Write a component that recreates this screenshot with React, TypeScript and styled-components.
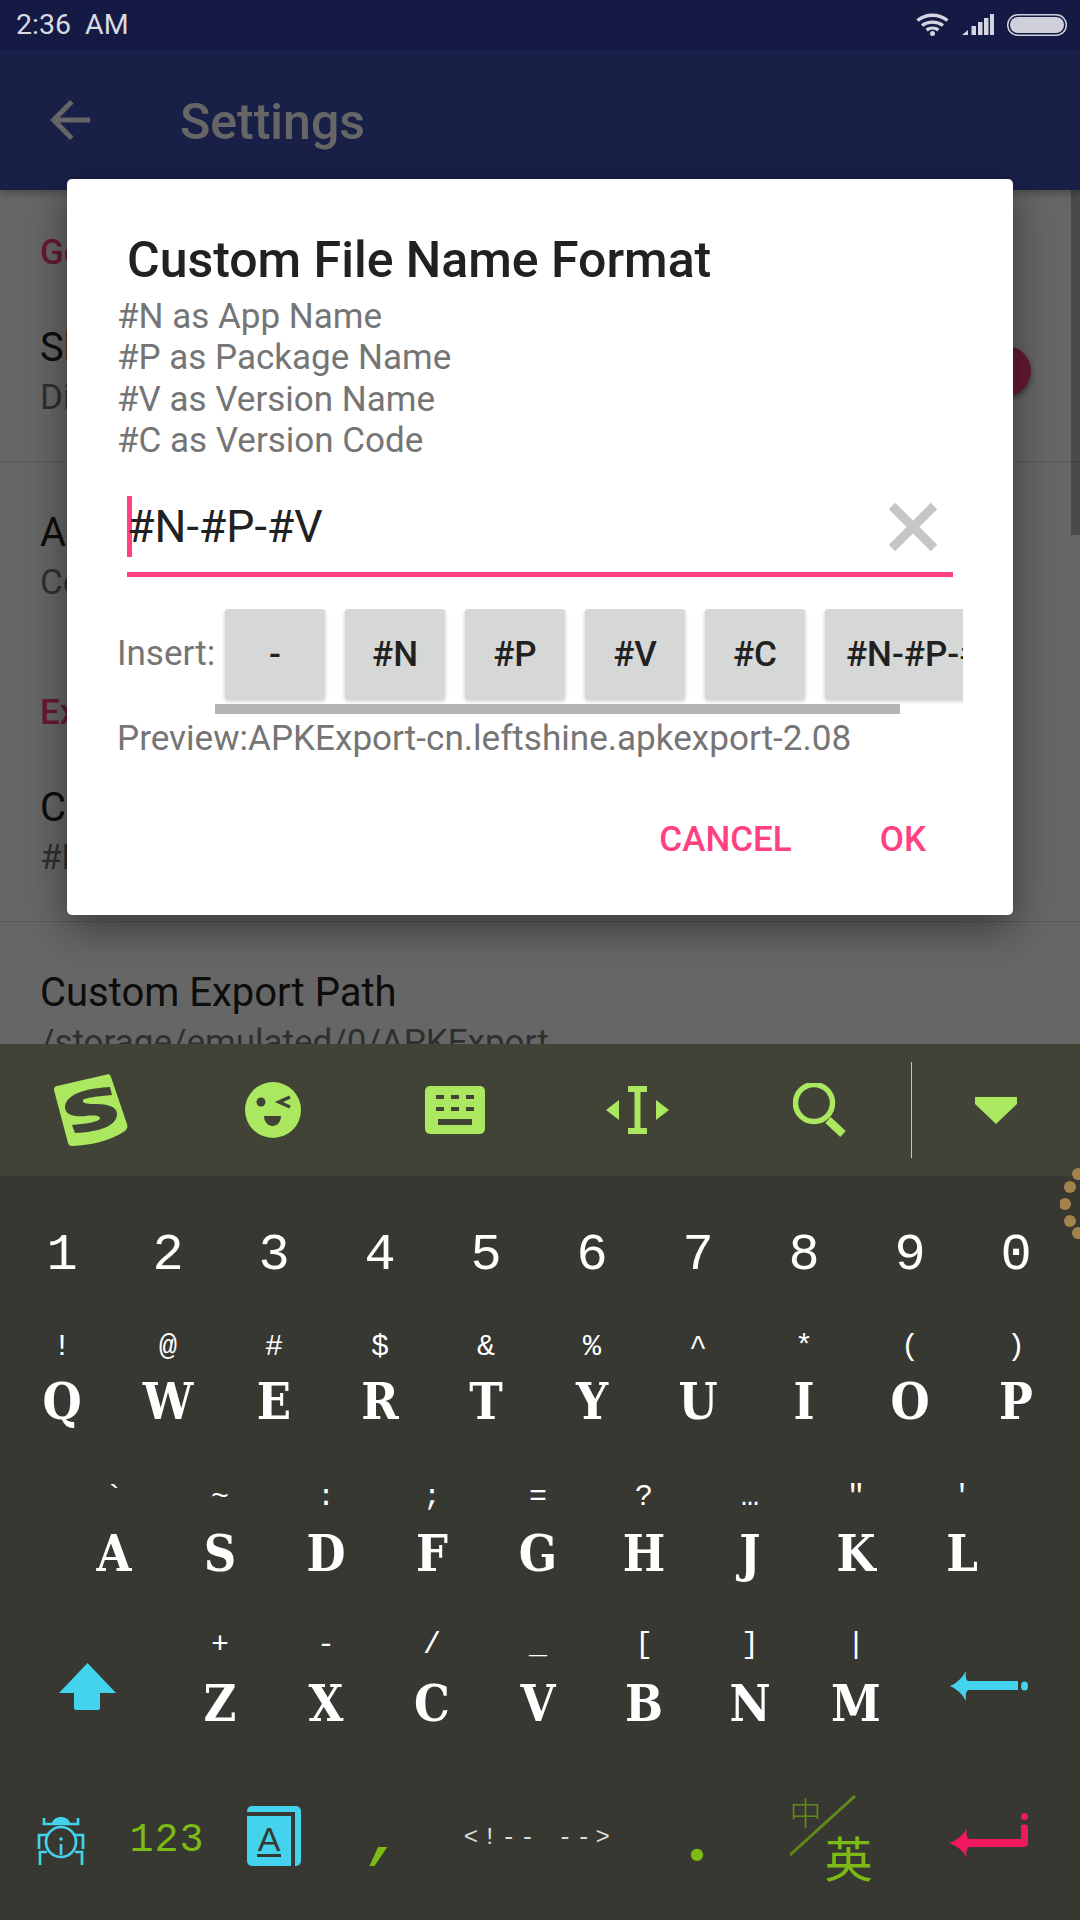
import { FC } from "react";
import styled, { createGlobalStyle } from "styled-components";

const GlobalStyle = createGlobalStyle`
  html, body {
    margin: 0;
    padding: 0;
    background: #373831;
  }
  * {
    box-sizing: border-box;
  }
`;

const ACCENT = "#ff4081";
const LIME = "#abe85f";
const CYAN = "#43d3ec";
const GREEN = "#7dbb14";

const Page = styled.div`
  width: 1080px;
  height: 1920px;
  display: flex;
  flex-direction: column;
  position: relative;
  overflow: hidden;
  font-family: Roboto, "Noto Sans", sans-serif;
`;

const StatusBar = styled.div`
  height: 50px;
  flex-shrink: 0;
  background: #141a44;
  display: flex;
  align-items: center;
  padding: 0 13px 0 16px;
  color: #d8d9e2;
  font-size: 28.5px;
`;

const Time = styled.span`
  flex: 1;
  white-space: pre;
  margin-top: -2px;
`;

const StatusIcons = styled.div`
  display: flex;
  align-items: center;
  gap: 13px;
  margin-top: -1px;
`;

const Main = styled.div`
  flex: 1;
  min-height: 0;
  position: relative;
  overflow: hidden;
  background: #fff;
`;

const AppBar = styled.div`
  height: 140px;
  background: #3f51b5;
  display: flex;
  align-items: center;
  padding-left: 40px;
  color: #fff;
  box-shadow: 0 3px 8px rgba(0, 0, 0, 0.3);
  position: relative;
`;

const AppTitle = styled.div`
  margin-left: 80px;
  margin-top: 3px;
  font-size: 50px;
  font-weight: 500;
`;

const SettingsList = styled.div`
  padding-top: 38px;
`;

const Section = styled.div`
  & + & {
    margin-top: 42px;
  }
`;

const SectionHeader = styled.div`
  height: 49px;
  line-height: 49px;
  padding-left: 40px;
  color: ${ACCENT};
  font-size: 35px;
  font-weight: 500;
`;

const Row = styled.div<{ $divider?: boolean }>`
  display: flex;
  align-items: center;
  justify-content: space-between;
  padding: 46px 49px 38px 40px;
  border-bottom: ${(p) => (p.$divider ? "1px solid #dcdcdc" : "none")};
`;

const RowTitle = styled.div`
  font-size: 40px;
  line-height: 50px;
  color: #212121;
`;

const RowSub = styled.div`
  font-size: 35px;
  line-height: 50px;
  color: #757575;
`;

const SwitchThumb = styled.div`
  width: 50px;
  height: 50px;
  margin-bottom: 5px;
  border-radius: 50%;
  background: ${ACCENT};
  box-shadow: 0 3px 6px rgba(0, 0, 0, 0.45);
`;

const ListScrollbar = styled.div`
  position: absolute;
  right: 0;
  top: 140px;
  width: 9px;
  height: 345px;
  background: rgba(0, 0, 0, 0.28);
`;

const Scrim = styled.div`
  position: absolute;
  inset: 0;
  background: rgba(0, 0, 0, 0.6);
  display: flex;
  justify-content: center;
  padding-top: 129px;
`;

const Dialog = styled.div`
  width: 946px;
  height: 736px;
  background: #fff;
  border-radius: 5px;
  box-shadow: 0 12px 40px rgba(0, 0, 0, 0.45);
  padding: 53px 50px 0 50px;
  display: flex;
  flex-direction: column;
`;

const DialogTitle = styled.div`
  margin-left: 10px;
  font-size: 50px;
  line-height: 56px;
  font-weight: 500;
  color: #212121;
`;

const Hints = styled.div`
  margin-top: 8px;
  font-size: 35px;
  line-height: 41.3px;
  color: #757575;
`;

const InputRow = styled.div`
  margin: 35px 10px 0 10px;
  height: 81px;
  padding-bottom: 15px;
  border-bottom: 5px solid ${ACCENT};
  display: flex;
  align-items: center;
`;

const Caret = styled.div`
  width: 5px;
  height: 61px;
  background: ${ACCENT};
  flex-shrink: 0;
`;

const InputText = styled.div`
  flex: 1;
  margin-left: -5px;
  font-size: 44.7px;
  color: #212121;
`;

const ClearIcon = styled.svg`
  width: 50px;
  height: 50px;
  margin-right: 15px;
  flex-shrink: 0;
`;

const InsertRow = styled.div`
  margin-top: 32px;
  display: flex;
`;

const InsertLabel = styled.div`
  width: 98px;
  height: 90px;
  line-height: 90px;
  font-size: 35px;
  color: #757575;
  flex-shrink: 0;
  white-space: nowrap;
`;

const Scroller = styled.div`
  flex: 1;
  min-width: 0;
  display: flex;
  flex-direction: column;
`;

const ButtonStrip = styled.div`
  display: flex;
  gap: 20px;
  padding: 0 0 5px 10px;
  overflow: hidden;
`;

const InsertButton = styled.div<{ $wide?: boolean }>`
  flex-shrink: 0;
  min-width: 100px;
  height: 90px;
  padding: 0 ${(p) => (p.$wide ? "21px" : "0")};
  display: flex;
  align-items: center;
  justify-content: center;
  background: #d6d7d7;
  border-radius: 3px;
  box-shadow: 0 2px 4px rgba(0, 0, 0, 0.22);
  color: #212121;
  font-size: 35px;
  font-weight: 500;
`;

const ScrollThumb = styled.div`
  width: 685px;
  height: 10px;
  background: #b3b3b3;
`;

const Preview = styled.div`
  margin-top: 4px;
  font-size: 35.1px;
  line-height: 41px;
  color: #757575;
  white-space: nowrap;
`;

const Actions = styled.div`
  margin-top: 61px;
  padding-right: 37px;
  display: flex;
  justify-content: flex-end;
  gap: 88px;
`;

const ActionButton = styled.div`
  color: ${ACCENT};
  font-size: 35px;
  line-height: 40px;
  font-weight: 500;
`;

const Keyboard = styled.div`
  height: 876px;
  flex-shrink: 0;
  position: relative;
  background: #373831;
  display: flex;
  flex-direction: column;
`;

const Toolbar = styled.div`
  height: 132px;
  background: #424337;
  display: flex;
  align-items: center;
`;

const ToolCell = styled.div<{ $wide?: boolean }>`
  width: ${(p) => (p.$wide ? "168px" : "182px")};
  display: flex;
  justify-content: center;
  align-items: center;
`;

const ToolDivider = styled.div`
  width: 1px;
  margin-left: 1px;
  height: 96px;
  background: ${LIME};
`;

const Beads = styled.svg`
  position: absolute;
  right: 0;
  top: 120px;
`;

const DigitRow = styled.div`
  height: 144px;
  padding: 50px 0 0 9px;
  display: flex;
`;

const Digit = styled.div`
  width: 106px;
  height: 60px;
  line-height: 60px;
  text-align: center;
  color: #fff;
  font-family: "Liberation Mono", monospace;
  font-size: 52px;
`;

const KeyRow = styled.div<{ $left: number; $top: number }>`
  height: 150px;
  padding: ${(p) => p.$top}px 0 0 ${(p) => p.$left}px;
  display: flex;
  align-items: flex-start;
`;

const Key = styled.div`
  width: 106px;
  display: flex;
  flex-direction: column;
  align-items: center;
  font-family: "Liberation Mono", monospace;
  color: #fff;
`;

const KeyHint = styled.div`
  height: 40px;
  line-height: 40px;
  font-size: 30px;
`;

const KeyLetter = styled.div<{ $gap: number }>`
  height: 60px;
  line-height: 60px;
  margin-top: ${(p) => p.$gap}px;
  font-family: "DejaVu Serif", serif;
  font-stretch: condensed;
  font-size: 50px;
  font-weight: 700;
`;

const ShiftCell = styled.div`
  width: 167px;
  padding: 38px 0 0 59px;
  display: flex;
`;

const BackspaceCell = styled.div`
  padding: 46px 0 0 41px;
  display: flex;
`;

const BottomRow = styled.div`
  flex: 1;
  display: grid;
  grid-template-columns: 122px 90px 124px 86px 234px 82px 186px 128px;
  align-items: start;
  padding-top: 20px;
`;

const BottomCell = styled.div<{ $top: number }>`
  margin-top: ${(p) => p.$top}px;
  display: flex;
  justify-content: center;
`;

const NumbersKey = styled.div`
  font-family: "Liberation Mono", monospace;
  font-size: 40px;
  line-height: 40px;
  letter-spacing: 1px;
  color: ${GREEN};
`;

const PeriodKey = styled.div`
  font-family: "Liberation Serif", serif;
  font-weight: 700;
  font-size: 76px;
  line-height: 58px;
  color: ${GREEN};
`;

const CommaKey = styled.div`
  margin-left: 12px;
  font-family: "Liberation Mono", monospace;
  font-weight: 700;
  font-style: italic;
  font-size: 60px;
  line-height: 58px;
  color: ${GREEN};
`;

const HtmlKey = styled.div`
  font-family: "Liberation Mono", monospace;
  font-size: 24px;
  line-height: 30px;
  letter-spacing: 4.4px;
  color: #dddddd;
  white-space: pre;
`;

const LangKey = styled.div`
  width: 83px;
  height: 85px;
  display: grid;
  font-family: "Noto Sans CJK SC", sans-serif;
`;

const LangOff = styled.span`
  grid-area: 1 / 1;
  justify-self: start;
  align-self: start;
  font-size: 32px;
  line-height: 32px;
  font-weight: 300;
  color: #5f8a1a;
`;

const LangOn = styled.span`
  grid-area: 1 / 1;
  justify-self: end;
  align-self: end;
  font-size: 48px;
  line-height: 48px;
  color: ${GREEN};
`;

const LangSlash = styled.svg`
  grid-area: 1 / 1;
`;

const rowQ = [
  ["!", "Q"], ["@", "W"], ["#", "E"], ["$", "R"], ["&", "T"],
  ["%", "Y"], ["^", "U"], ["*", "I"], ["(", "O"], [")", "P"],
];
const rowA = [
  ["`", "A"], ["~", "S"], [":", "D"], [";", "F"], ["=", "G"],
  ["?", "H"], ["…", "J"], ['"', "K"], ["'", "L"],
];
const rowZ = [
  ["+", "Z"], ["-", "X"], ["/", "C"], ["_", "V"], ["[", "B"], ["]", "N"], ["|", "M"],
];

const Keys: FC<{ keys: string[][]; gap: number }> = ({ keys, gap }) => (
  <>
    {keys.map(([hint, letter]) => (
      <Key key={letter}>
        <KeyHint>{hint}</KeyHint>
        <KeyLetter $gap={gap}>{letter}</KeyLetter>
      </Key>
    ))}
  </>
);

const WifiIcon = () => (
  <svg width="33" height="23" viewBox="0 0 33 23" fill="none" stroke="#d4d5e0" strokeWidth="3.4">
    <path d="M1.5 7.5C10 .5 23 .5 31.5 7.5" />
    <path d="M6 12.5C12 8 21 8 27 12.5" />
    <path d="M10.5 17C14 14.5 19 14.5 22.5 17" />
    <circle cx="16.5" cy="20.5" r="2.5" fill="#d4d5e0" stroke="none" />
  </svg>
);

const SignalIcon = () => (
  <svg width="32" height="21" viewBox="0 0 32 21" fill="#d4d5e0">
    <path d="M0 21L6 16V21Z" />
    <rect x="9.5" y="12" width="4.5" height="9" />
    <rect x="16" y="8" width="4.5" height="13" />
    <rect x="22" y="4" width="4.5" height="17" />
    <rect x="28" y="0" width="4" height="21" />
  </svg>
);

const BatteryIcon = () => (
  <svg width="60" height="22" viewBox="0 0 60 22">
    <rect x=".75" y=".75" width="58.5" height="20.5" rx="10" fill="none" stroke="#cfd0dc" strokeWidth="1.5" />
    <rect x="3" y="3" width="54" height="16" rx="8" fill="#cfd0dc" />
  </svg>
);

const BackIcon = () => (
  <svg width="60" height="60" viewBox="0 0 24 24" fill="#fff">
    <path d="M20 11H7.83l5.59-5.59L12 4l-8 8 8 8 1.41-1.41L7.83 13H20v-2z" />
  </svg>
);

const LogoIcon = () => (
  <svg width="74" height="73" viewBox="0 0 74 73">
    <path
      d="M3 12L53 .5C55 0 56.5 1 57 3L73 50C74 53 73 55 71 57C55 68 35 71 19 72C16 72.500 14.500 71 14 69L0 16C-.5 14 1 12.500 3 12Z"
      fill={LIME}
    />
    <path
      d="M56 13C38 14 12 18 11 33C11 42 22 43 32 42C40 41 46 42 46 44C46 48 30 50 18 51L21 59C45 58 63 52 63 40C63 31 50 30 40 30C32 30 28 29 29 26C30 24 45 22 58 21Z"
      fill="#424337"
    />
  </svg>
);

const WinkIcon = () => (
  <svg width="56" height="56" viewBox="0 0 56 56">
    <circle cx="28" cy="28" r="28" fill={LIME} />
    <circle cx="16" cy="20" r="4.500" fill="#424337" />
    <path d="M45 15L34 20L45 25" fill="none" stroke="#424337" strokeWidth="3.500" />
    <path d="M19 34H36C36 40 32 44 27.500 44C23 44 19 40 19 34Z" fill="#424337" />
  </svg>
);

const KeyboardIcon = () => (
  <svg width="60" height="48" viewBox="0 0 60 48">
    <rect width="60" height="48" rx="5" fill={LIME} />
    <g fill="#424337">
      <rect x="11" y="9" width="8" height="4" />
      <rect x="26" y="9" width="8" height="4" />
      <rect x="41" y="9" width="8" height="4" />
      <rect x="11" y="21" width="8" height="4" />
      <rect x="26" y="21" width="8" height="4" />
      <rect x="41" y="21" width="8" height="4" />
      <rect x="13" y="33" width="34" height="6" />
    </g>
  </svg>
);

const CursorIcon = () => (
  <svg width="63" height="48" viewBox="0 0 63 48" fill={LIME}>
    <path d="M22 0H41V6H34.500V42H41V48H22V42H28.500V6H22Z" />
    <path d="M0 24L13 14V34Z" />
    <path d="M63 24L50 14V34Z" />
  </svg>
);

const SearchIcon = () => (
  <svg width="53" height="54" viewBox="0 0 53 54" fill="none" stroke={LIME}>
    <circle cx="21" cy="20" r="18.500" strokeWidth="5.500" />
    <path d="M35 37L50 51" strokeWidth="8" />
  </svg>
);

const CollapseIcon = () => (
  <svg width="42" height="27" viewBox="0 0 42 27" fill={LIME}>
    <path d="M0 0H42V7L21 27L0 7Z" />
  </svg>
);

const ShiftIcon = () => (
  <svg width="57" height="47" viewBox="0 0 57 47" fill={CYAN}>
    <path d="M28.500 0L57 30H41V45C41 46 40 47 39 47H17C16 47 15 46 15 45V30H0Z" />
  </svg>
);

const BackspaceIcon = () => (
  <svg width="79" height="30" viewBox="0 0 79 30" fill={CYAN}>
    <path d="M16 0Q10 11 0 15Q10 19 16 30Q15 21 18 19H68V10H18Q15 9 16 0Z" />
    <ellipse cx="74.500" cy="15" rx="3.500" ry="4.500" />
  </svg>
);

const BugIcon = () => (
  <svg width="48" height="48" viewBox="0 0 48 48" fill="none" stroke={CYAN} strokeWidth="2.700">
    <circle cx="24" cy="25" r="15" />
    <path d="M15 6C17 -2 31 -2 33 6Z" fill={CYAN} stroke="none" />
    <path d="M7 1V7H41V1" />
    <path d="M10 18H2V32" />
    <path d="M38 18H46V32" />
    <path d="M10 35H3V48" />
    <path d="M38 35H45V48" />
    <circle cx="24" cy="22" r="1.800" fill={CYAN} stroke="none" />
    <path d="M24 27V38" />
  </svg>
);

const BookIcon = () => (
  <svg width="54" height="60" viewBox="0 0 54 60">
    <rect width="54" height="60" rx="5" fill={CYAN} />
    <rect y="6" width="48" height="4" fill="#373831" />
    <rect x="44" y="10" width="4" height="50" fill="#373831" />
    <text x="22" y="45" textAnchor="middle" fontFamily="Liberation Sans" fontSize="34" fill="#373831">
      A
    </text>
    <rect x="10" y="48" width="24" height="3" fill="#373831" />
  </svg>
);

const EnterIcon = () => (
  <svg width="79" height="45" viewBox="0 0 79 45" fill="#f0185f">
    <circle cx="75.500" cy="3.500" r="3.500" />
    <path d="M18 15Q12 26 0 30Q12 34 18 45Q16 37 20 34H74C77 34 79 33 79 30V13C79 11 72 11 72 13V26H20Q16 23 18 15Z" />
  </svg>
);

const App: FC = () => {
  return (
    <Page>
      <GlobalStyle />
      <StatusBar>
        <Time>2:36  AM</Time>
        <StatusIcons>
          <WifiIcon />
          <SignalIcon />
          <BatteryIcon />
        </StatusIcons>
      </StatusBar>

      <Main>
        <AppBar>
          <BackIcon />
          <AppTitle>Settings</AppTitle>
        </AppBar>
        <SettingsList>
          <Section>
            <SectionHeader>General</SectionHeader>
            <Row $divider>
              <div>
                <RowTitle>Show System Apps</RowTitle>
                <RowSub>Display system apps in list</RowSub>
              </div>
              <SwitchThumb />
            </Row>
            <Row>
              <div>
                <RowTitle>About</RowTitle>
                <RowSub>Contact the developer</RowSub>
              </div>
            </Row>
          </Section>
          <Section>
            <SectionHeader>Export</SectionHeader>
            <Row $divider>
              <div>
                <RowTitle>Custom File Name Format</RowTitle>
                <RowSub>#N-#P-#V</RowSub>
              </div>
            </Row>
            <Row>
              <div>
                <RowTitle>Custom Export Path</RowTitle>
                <RowSub>/storage/emulated/0/APKExport</RowSub>
              </div>
            </Row>
          </Section>
        </SettingsList>
        <ListScrollbar />
        <Scrim>
          <Dialog>
            <DialogTitle>Custom File Name Format</DialogTitle>
            <Hints>
              #N as App Name
              <br />
              #P as Package Name
              <br />
              #V as Version Name
              <br />
              #C as Version Code
            </Hints>
            <InputRow>
              <Caret />
              <InputText>#N-#P-#V</InputText>
              <ClearIcon viewBox="0 0 50 50">
                <path d="M4 4L46 46M46 4L4 46" stroke="#c6c6c6" strokeWidth="9" fill="none" />
              </ClearIcon>
            </InputRow>
            <InsertRow>
              <InsertLabel>Insert:</InsertLabel>
              <Scroller>
                <ButtonStrip>
                  <InsertButton>-</InsertButton>
                  <InsertButton>#N</InsertButton>
                  <InsertButton>#P</InsertButton>
                  <InsertButton>#V</InsertButton>
                  <InsertButton>#C</InsertButton>
                  <InsertButton $wide>#N-#P-#V</InsertButton>
                </ButtonStrip>
                <ScrollThumb />
              </Scroller>
            </InsertRow>
            <Preview>Preview:APKExport-cn.leftshine.apkexport-2.08</Preview>
            <Actions>
              <ActionButton>CANCEL</ActionButton>
              <ActionButton>OK</ActionButton>
            </Actions>
          </Dialog>
        </Scrim>
      </Main>

      <Keyboard>
        <Toolbar>
          <ToolCell><LogoIcon /></ToolCell>
          <ToolCell><WinkIcon /></ToolCell>
          <ToolCell><KeyboardIcon /></ToolCell>
          <ToolCell><CursorIcon /></ToolCell>
          <ToolCell><SearchIcon /></ToolCell>
          <ToolDivider />
          <ToolCell $wide><CollapseIcon /></ToolCell>
        </Toolbar>
        <Beads width="20" height="80" viewBox="0 0 20 80" fill="#a3824c">
          <circle cx="18" cy="10" r="6" />
          <circle cx="10" cy="23" r="6" />
          <circle cx="5" cy="40" r="6" />
          <circle cx="10" cy="57" r="6" />
          <circle cx="18" cy="69" r="6" />
        </Beads>
        <DigitRow>
          {"1234567890".split("").map((d) => (
            <Digit key={d}>{d}</Digit>
          ))}
        </DigitRow>
        <KeyRow $left={9} $top={7}>
          <Keys keys={rowQ} gap={5} />
        </KeyRow>
        <KeyRow $left={61} $top={7}>
          <Keys keys={rowA} gap={7} />
        </KeyRow>
        <KeyRow $left={0} $top={5}>
          <ShiftCell><ShiftIcon /></ShiftCell>
          <Keys keys={rowZ} gap={9} />
          <BackspaceCell><BackspaceIcon /></BackspaceCell>
        </KeyRow>
        <BottomRow>
          <BottomCell $top={27}><BugIcon /></BottomCell>
          <BottomCell $top={31}><NumbersKey>123</NumbersKey></BottomCell>
          <BottomCell $top={16}><BookIcon /></BottomCell>
          <BottomCell $top={20}><CommaKey>,</CommaKey></BottomCell>
          <BottomCell $top={33}><HtmlKey>{"<!-- -->"}</HtmlKey></BottomCell>
          <BottomCell $top={15}><PeriodKey>.</PeriodKey></BottomCell>
          <BottomCell $top={5}>
            <LangKey>
              <LangOff>中</LangOff>
              <LangOn>英</LangOn>
              <LangSlash width="83" height="85" viewBox="0 0 83 85">
                <path d="M0 60L65 1" stroke="#5f8a1a" strokeWidth="3" fill="none" />
              </LangSlash>
            </LangKey>
          </BottomCell>
          <BottomCell $top={23}><EnterIcon /></BottomCell>
        </BottomRow>
      </Keyboard>
    </Page>
  );
};

export default App;
